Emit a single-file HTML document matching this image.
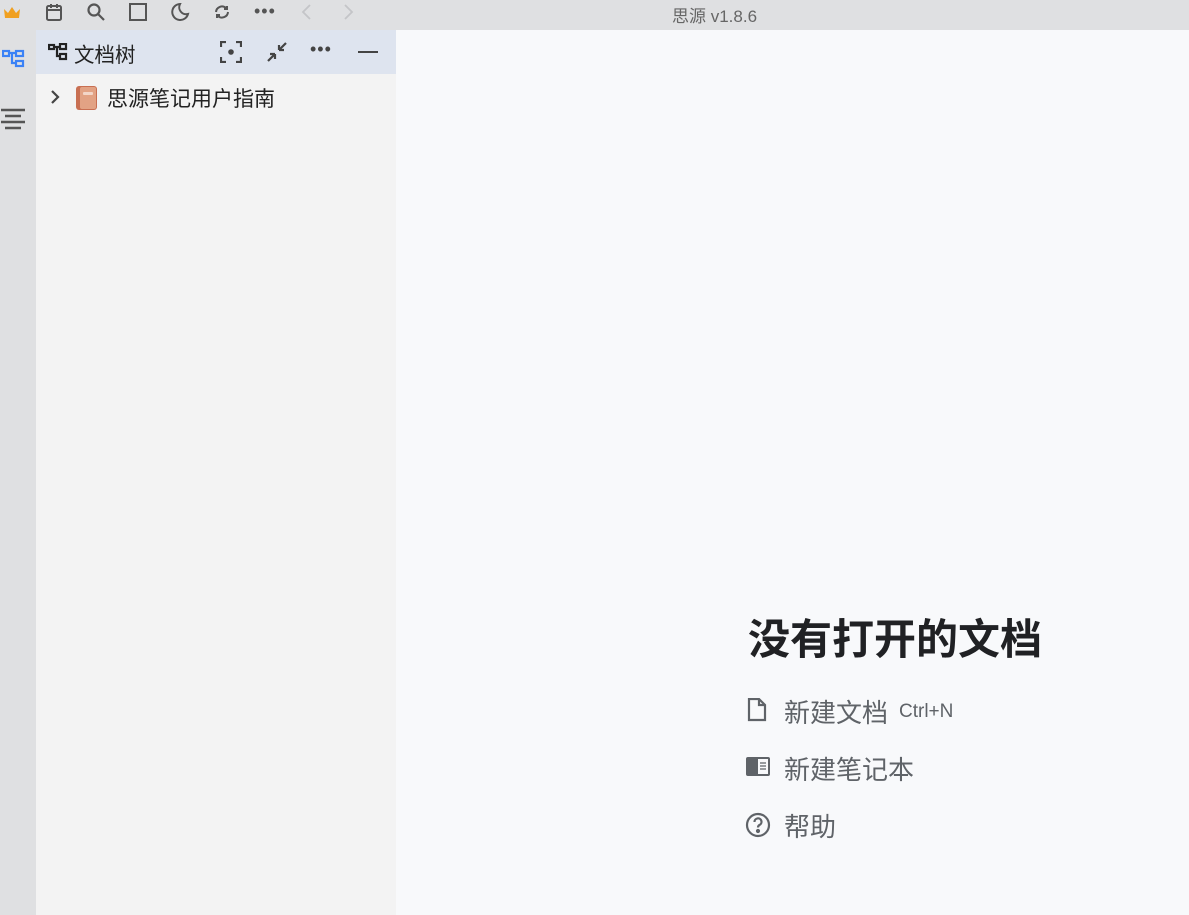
<!DOCTYPE html>
<html><head><meta charset="utf-8"><style>
*{margin:0;padding:0;box-sizing:border-box}
body{width:1189px;height:915px;overflow:hidden;background:#f8f9fb;font-family:"Liberation Sans","Noto Sans CJK SC",sans-serif;position:relative}
.top{position:absolute;left:0;top:0;width:1189px;height:30px;background:#dfe0e2}
.rail{position:absolute;left:0;top:30px;width:36px;height:885px;background:#dfe0e2}
.panel{position:absolute;left:36px;top:30px;width:360px;height:885px;background:#f3f3f3}
.ph{height:44px;background:#dee4ef;position:relative}
svg{position:absolute}
.t{position:absolute;white-space:nowrap}
</style></head><body>
<div class="top">
<svg style="left:3px;top:6px" width="18" height="14" viewBox="0 0 18 14"><path d="M1 3l4 4 4-6 4 6 4-4-1 9H2z" fill="#f0a020"/></svg>
<svg style="left:44px;top:2px" width="20" height="20" viewBox="0 0 20 20" fill="none" stroke="#555" stroke-width="2"><rect x="3" y="4" width="14" height="14" rx="1.5"/><path d="M3 8h14M7 2v4M13 2v4"/></svg>
<svg style="left:86px;top:2px" width="20" height="20" viewBox="0 0 20 20" fill="none" stroke="#555" stroke-width="2.2"><circle cx="8" cy="8" r="5.5"/><path d="M12 12l6 6"/></svg>
<svg style="left:128px;top:2px" width="20" height="20" viewBox="0 0 20 20" fill="none" stroke="#555" stroke-width="2"><rect x="2" y="2" width="16" height="16"/></svg>
<svg style="left:170px;top:2px" width="20" height="20" viewBox="0 0 20 20" fill="none" stroke="#555" stroke-width="2"><path d="M10 2a8 8 0 1 0 8 10A7 7 0 0 1 10 2z"/></svg>
<svg style="left:213px;top:3px" width="18" height="18" viewBox="0 0 18 18" fill="none" stroke="#555" stroke-width="2"><path d="M3 9a6 6 0 0 1 10-4l1 1M15 9a6 6 0 0 1-10 4l-1-1M14 3v3h-3M4 15v-3h3"/></svg>
<div class="t" style="left:254px;top:1px;font-size:18px;color:#555;letter-spacing:1px">•••</div>
<svg style="left:298px;top:3px" width="18" height="18" viewBox="0 0 18 18" fill="none" stroke="#c4c5c8" stroke-width="1.8"><path d="M12 2L5 9l7 7"/></svg>
<svg style="left:339px;top:3px" width="18" height="18" viewBox="0 0 18 18" fill="none" stroke="#c4c5c8" stroke-width="1.8"><path d="M6 2l7 7-7 7"/></svg>
<div class="t" style="left:672px;top:2px;font-size:17px;color:#666">思源 v1.8.6</div>
</div>
<div class="rail">
<svg style="left:2px;top:18px" width="24" height="24" viewBox="0 0 24 24" fill="none" stroke="#3b82f6" stroke-width="2.2"><rect x="1" y="3" width="6" height="5"/><rect x="14" y="3" width="7" height="5"/><rect x="14" y="13" width="7" height="5"/><path d="M7 5h7M10 5v10h4"/></svg>
<svg style="left:0px;top:77px" width="26" height="26" viewBox="0 0 26 26" fill="none" stroke="#555" stroke-width="2.4"><path d="M1 3h24M5 9h16M1 15h24M5 21h16"/></svg>
</div>
<div class="panel">
<div class="ph">
<svg style="left:12px;top:13px" width="20" height="18" viewBox="0 0 20 18" fill="none" stroke="#222" stroke-width="2.2"><rect x="1" y="2" width="5" height="4"/><rect x="12" y="1" width="6" height="5"/><rect x="12" y="11" width="6" height="5"/><path d="M6 4h6M9 4v9h3"/></svg>
<div class="t" style="left:38px;top:8px;font-size:20.5px;color:#222">文档树</div>
<svg style="left:184px;top:11px" width="22" height="22" viewBox="0 0 22 22" fill="none" stroke="#444" stroke-width="2.2"><path d="M1 6V1h5M16 1h5v5M21 16v5h-5M6 21H1v-5"/><circle cx="11" cy="11" r="2.8" fill="#444" stroke="none"/></svg>
<svg style="left:230px;top:11px" width="22" height="22" viewBox="0 0 22 22" fill="none" stroke="#444" stroke-width="2.2"><path d="M2 20l7-7M9 13H4M9 13v5M20 2l-7 7M13 9h5M13 9V4"/></svg>
<div class="t" style="left:274px;top:9px;font-size:18px;color:#444;letter-spacing:1px">•••</div>
<div style="position:absolute;left:322px;top:21px;width:20px;height:2px;background:#444"></div>
</div>
<svg style="left:13px;top:58px" width="12" height="18" viewBox="0 0 12 18" fill="none" stroke="#444" stroke-width="2.2"><path d="M3 3l6 6-6 6"/></svg>
<svg style="left:39px;top:55px" width="24" height="26" viewBox="0 0 24 26"><rect x="1" y="1" width="21" height="24" rx="3" fill="#c86f52"/><rect x="5" y="2" width="16" height="22" rx="2" fill="#e2a284"/><rect x="8" y="7" width="10" height="3" rx="1" fill="#f3d6c8"/></svg>
<div class="t" style="left:71px;top:53px;font-size:21px;color:#222">思源笔记用户指南</div>
</div>
<div class="t" style="left:748px;top:606px;font-size:42px;font-weight:bold;color:#202124">没有打开的文档</div>
<svg style="left:746px;top:698px" width="22" height="24" viewBox="0 0 22 24" fill="none" stroke="#5f6368" stroke-width="2.2"><path d="M3 1h10l6 6v15H3z"/><path d="M13 1v6h6"/></svg>
<div class="t" style="left:784px;top:693px;font-size:26px;color:#5f6368">新建文档</div>
<div class="t" style="left:899px;top:701px;font-size:19px;color:#5f6368">Ctrl+N</div>
<svg style="left:746px;top:757px" width="25" height="20" viewBox="0 0 25 20"><rect x="0" y="0" width="24" height="19" rx="2" fill="#5f6368"/><rect x="12" y="2" width="10" height="15" fill="#f8f9fb"/><path d="M14 6h6M14 9h6M14 12h6" stroke="#5f6368" stroke-width="1.3"/></svg>
<div class="t" style="left:784px;top:750px;font-size:26px;color:#5f6368">新建笔记本</div>
<svg style="left:745px;top:812px" width="26" height="26" viewBox="0 0 26 26" fill="none" stroke="#5f6368" stroke-width="2.2"><circle cx="13" cy="13" r="11"/><path d="M9.5 10a3.5 3.5 0 1 1 5 3c-1 .6-1.5 1.2-1.5 2.5"/><circle cx="13" cy="19" r="1" fill="#5f6368"/></svg>
<div class="t" style="left:784px;top:807px;font-size:26px;color:#5f6368">帮助</div>
</body></html>
